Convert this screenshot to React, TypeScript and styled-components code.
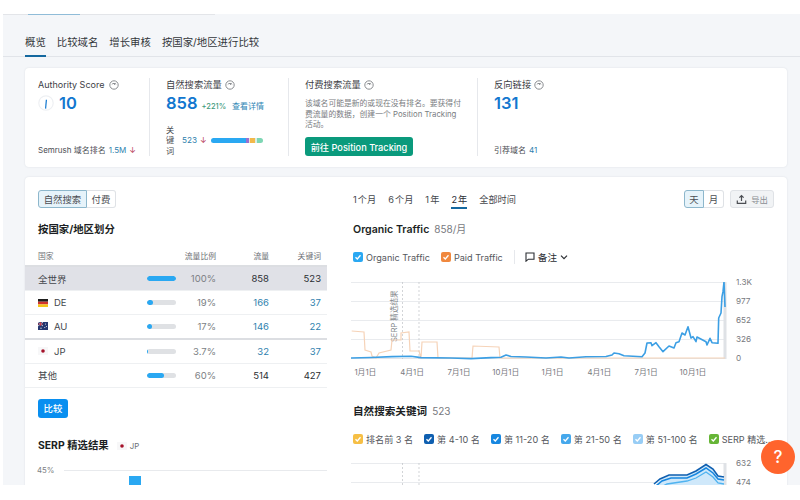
import React from "react";
import styled, { createGlobalStyle } from "styled-components";

const GlobalStyle = createGlobalStyle`
  html, body {
    margin: 0;
    background: #fff;
    font-family: Inter, "Noto Sans CJK SC", sans-serif;
    color: #2b2e33;
  }
  * { box-sizing: border-box; }
`;

const Page = styled.div`
  position: relative;
  width: 800px;
  height: 500px;
  overflow: hidden;
  background: #fff;
`;

const TopBar = styled.div`
  height: 14px;
  background: #fff;
`;

const Shell = styled.div`
  height: 471px;
  margin-left: 3px;
  overflow: hidden;
  background: #f4f6f9;
`;

const Progress = styled.div`
  display: flex;
  height: 1px;
  width: 212px;
  background: #e3e5e9;
  padding-left: 25px;
`;

const ProgressFill = styled.div`
  width: 52px;
  background: #8fbcd8;
`;

const Tabs = styled.nav`
  display: flex;
  gap: 11px;
  height: 42px;
  padding: 20px 0 0 22px;
  border-bottom: 1px solid #e1e4e9;
`;

const Tab = styled.div<{ $active?: boolean }>`
  height: 22px;
  font-size: 10.4px;
  line-height: 16px;
  color: #33363b;
  border-bottom: 2px solid ${({ $active }) => ($active ? "#14689f" : "transparent")};
`;

const Card = styled.section`
  width: 762px;
  margin-left: 22px;
  background: #fff;
  border-radius: 4px;
  box-shadow: 0 0 2px rgba(40, 50, 70, 0.12);
`;

const Summary = styled(Card)`
  display: grid;
  grid-template-columns: 111px 139px 189px 1fr;
  height: 99px;
  margin-top: 11px;
  padding: 10px 0 11px 13px;
`;

const Metric = styled.div<{ $first?: boolean }>`
  display: flex;
  flex-direction: column;
  padding-left: ${({ $first }) => ($first ? "0" : "16px")};
  border-left: ${({ $first }) => ($first ? "none" : "1px solid #e6e8ec")};
`;

const MetricTitle = styled.div`
  display: flex;
  align-items: center;
  gap: 3px;
  height: 13px;
  font-size: 9.3px;
  line-height: 13px;
  color: #3d4045;
`;

const ScoreTitle = styled(MetricTitle)`
  gap: 5px;
  font-size: 9px;
`;

const MetricValue = styled.div`
  display: flex;
  align-items: baseline;
  gap: 4px;
  height: 24px;
  font-size: 16.5px;
  line-height: 24px;
  font-weight: 600;
  color: #1277cf;
`;

const ScoreRow = styled(MetricValue)`
  align-items: center;
  gap: 5px;
`;

const Growth = styled.span`
  font-size: 7.5px;
  font-weight: 500;
  color: #3f9a7c;
`;

const DetailLink = styled.span`
  margin-left: 2px;
  font-size: 8px;
  font-weight: 400;
  color: #2f86b5;
`;

const MetricFoot = styled.div`
  display: flex;
  align-items: center;
  gap: 3px;
  margin-top: auto;
  font-size: 8px;
  line-height: 11px;
  color: #4b4e53;
`;

const FootLink = styled.span`
  color: #2f7fae;
`;

const DownArrow = styled.span`
  color: #b8415b;
  font-size: 8px;
`;

const KeywordRow = styled.div`
  display: flex;
  align-items: center;
  margin-top: auto;
`;

const KeywordLabel = styled.div`
  width: 16px;
  font-size: 8.2px;
  line-height: 10.5px;
  color: #4b4e53;
`;

const KeywordCount = styled.span`
  margin-right: 3px;
  font-size: 8.2px;
  color: #2f7fae;
`;

const Stacked = styled.div`
  display: flex;
  width: 52px;
  height: 5px;
  margin-left: 4px;
  border-radius: 3px;
  overflow: hidden;
`;

const Segment = styled.div<{ $w: number; $c: string }>`
  width: ${({ $w }) => $w}px;
  background: ${({ $c }) => $c};
`;

const Note = styled.p`
  margin: 7px 0 0;
  width: 158px;
  font-size: 7.8px;
  line-height: 10.6px;
  color: #7a7d82;
`;

const GoButton = styled.div`
  display: flex;
  align-items: center;
  justify-content: center;
  width: 108px;
  height: 19px;
  margin-top: auto;
  border-radius: 3px;
  background: #0a9a7c;
  color: #fff;
  font-size: 9.2px;
  font-weight: 500;
`;

const Main = styled(Card)`
  display: grid;
  grid-template-columns: 302px 1fr;
  column-gap: 25px;
  margin-top: 10px;
  height: 340px;
  padding: 13px 13px 0 0;
`;

const LeftPane = styled.div`
  min-width: 0;
`;

const Toggle = styled.div`
  display: flex;
  height: 18px;
  border-radius: 3px;
  font-size: 9.4px;
`;

const ToggleItem = styled.div<{ $on?: boolean; $w: number }>`
  display: flex;
  align-items: center;
  justify-content: center;
  width: ${({ $w }) => $w}px;
  color: #4b4e53;
  background: ${({ $on }) => ($on ? "#e6f3fa" : "#fff")};
  border: 1px solid ${({ $on }) => ($on ? "#8db7cc" : "#dfe2e6")};
  border-left-width: ${({ $on }) => ($on ? "1px" : "0")};
  border-radius: ${({ $on }) => ($on ? "3px 0 0 3px" : "0 3px 3px 0")};
`;

const LeftToggle = styled(Toggle)`
  margin-left: 13px;
`;

const SectionTitle = styled.h3`
  margin: 15px 0 0 13px;
  font-size: 10.4px;
  line-height: 14px;
  font-weight: 700;
  color: #1c1f24;
`;

const TableRow = styled.div<{ $world?: boolean; $head?: boolean; $thick?: boolean }>`
  display: grid;
  grid-template-columns: 109px 29px 40px 53px 52px;
  align-items: center;
  height: ${({ $head }) => ($head ? "30px" : "24.2px")};
  padding: ${({ $head }) => ($head ? "9px" : "0")} 6px 0 13px;
  font-size: ${({ $head }) => ($head ? "7.8px" : "9.5px")};
  background: ${({ $world }) => ($world ? "#e0e1e7" : "#fff")};
  border-bottom: ${({ $thick, $head }) =>
    $thick || $head ? "2px solid #dcdee2" : "1px solid #eef0f2"};
  color: ${({ $head }) => ($head ? "#6e7176" : "#2b2e33")};
`;

const NameCell = styled.div`
  display: flex;
  align-items: center;
  gap: 6px;
  color: #44474c;
`;

const NumCell = styled.div<{ $link?: boolean; $muted?: boolean; $span?: boolean }>`
  text-align: right;
  grid-column: ${({ $span }) => ($span ? "2 / 4" : "auto")};
  color: ${({ $link, $muted }) => ($link ? "#2f7fae" : $muted ? "#7c7f84" : "inherit")};
`;

const Track = styled.div`
  height: 5px;
  border-radius: 3px;
  background: #dfe1e4;
  overflow: hidden;
`;

const Fill = styled.div<{ $pct: number }>`
  width: ${({ $pct }) => $pct}%;
  min-width: 1px;
  height: 100%;
  border-radius: 3px;
  background: #2aa8f2;
`;

const CompareButton = styled.div`
  display: flex;
  align-items: center;
  justify-content: center;
  width: 30px;
  height: 19px;
  margin: 11px 0 0 13px;
  border-radius: 3px;
  background: #098ff0;
  color: #fff;
  font-size: 9.4px;
  font-weight: 500;
`;

const SerpHead = styled.div`
  display: flex;
  align-items: center;
  gap: 8px;
  margin: 21px 0 0 13px;
  font-size: 10.4px;
  line-height: 14px;
  font-weight: 700;
  color: #1c1f24;
`;

const SerpCountry = styled.span`
  display: flex;
  align-items: center;
  gap: 3px;
  font-size: 7.8px;
  font-weight: 400;
  color: #6e7176;
`;

const SerpChart = styled.div`
  display: grid;
  grid-template-columns: 27px 1fr;
  margin: 12px 0 0 12px;
  height: 30px;
  font-size: 7.8px;
  line-height: 10px;
  color: #7c7f84;
`;

const SerpPlot = styled.div`
  display: flex;
  flex-direction: column;
  border-top: 1px solid #e8eaed;
  margin-top: 5px;
  padding: 5px 0 0 65px;
`;

const SerpBar = styled.div`
  width: 12px;
  height: 20px;
  background: #2aa8f2;
`;

const RightPane = styled.div`
  min-width: 0;
`;

const RightHead = styled.div`
  display: flex;
  justify-content: space-between;
  align-items: flex-start;
  height: 20px;
`;

const Periods = styled.div`
  display: flex;
  gap: 12px;
  padding: 3px 0 0 1px;
`;

const Period = styled.div<{ $active?: boolean }>`
  height: 16px;
  font-size: 9.2px;
  line-height: 13px;
  word-spacing: -1.5px;
  color: ${({ $active }) => ($active ? "#2b2e33" : "#44474c")};
  border-bottom: 2px solid ${({ $active }) => ($active ? "#14689f" : "transparent")};
`;

const RightTools = styled.div`
  display: flex;
  gap: 6px;
`;

const ExportButton = styled.div`
  display: flex;
  align-items: center;
  justify-content: center;
  gap: 4px;
  width: 44px;
  height: 18px;
  border-radius: 3px;
  background: #f1f3f5;
  border: 1px solid #dfe2e6;
  color: #8b8e93;
  font-size: 8.4px;
`;

const ChartTitle = styled.div`
  display: flex;
  align-items: baseline;
  gap: 5px;
  margin-top: 12px;
  padding-left: 1px;
  font-size: 10.6px;
  line-height: 14px;
  font-weight: 600;
  color: #1c1f24;
`;

const ChartCount = styled.span`
  font-size: 10px;
  font-weight: 400;
  color: #77797e;
`;

const Legend = styled.div`
  display: flex;
  align-items: center;
  margin-top: 13px;
  padding-left: 1px;
  height: 14px;
  white-space: nowrap;
`;

const LegendItem = styled.div<{ $gap?: number }>`
  display: flex;
  align-items: center;
  gap: 3px;
  margin-right: ${({ $gap }) => $gap ?? 11}px;
  font-size: 9.1px;
  color: #55585d;
`;

const Box = styled.span<{ $c: string }>`
  display: flex;
  align-items: center;
  justify-content: center;
  width: 10px;
  height: 10px;
  border-radius: 2px;
  background: ${({ $c }) => $c};
`;

const NotesButton = styled.div`
  display: flex;
  align-items: center;
  gap: 3px;
  padding-left: 10px;
  border-left: 1px solid #e6e8ec;
  font-size: 9.6px;
  color: #2b2e33;
`;

const ChartGrid = styled.div`
  display: grid;
  grid-template-columns: 376px 1fr;
  column-gap: 9px;
  margin-top: 18px;
  margin-left: -1px;
`;

const YAxis = styled.div<{ $h: number }>`
  display: flex;
  flex-direction: column;
  justify-content: space-between;
  height: ${({ $h }) => $h}px;
  margin-top: -5px;
  font-size: 8.2px;
  line-height: 10px;
  color: #77797e;
`;

const XAxis = styled.div`
  display: grid;
  grid-template-columns: repeat(8, 46.8px);
  margin: 7px 0 0 -9px;
  font-size: 7.8px;
  line-height: 10px;
  color: #77797e;
  text-align: center;
`;

const Plot = styled.svg`
  display: block;
`;

const KeywordsTitle = styled(ChartTitle)`
  margin-top: 27px;
`;

const KeywordGrid = styled(ChartGrid)`
  margin-top: 17px;
`;

const HelpButton = styled.div`
  position: absolute;
  left: 761px;
  top: 440px;
  display: flex;
  align-items: center;
  justify-content: center;
  width: 34px;
  height: 34px;
  border-radius: 50%;
  background: #ff642d;
  color: #fff;
  font-size: 17px;
  font-weight: 500;
`;

const HintIcon = () => (
  <svg width="10" height="10" viewBox="0 0 10 10" fill="none" stroke="#8a8d91" strokeWidth="1">
    <circle cx="5" cy="5" r="4.2" />
    <path d="M2.8 4.4 C3.6 3.1 6.4 3.1 7.2 4.4 M5 4.8 L6.4 3.5" />
  </svg>
);

const Gauge = () => (
  <svg width="16" height="16" viewBox="0 0 16 16" fill="none">
    <circle cx="8" cy="8" r="7.2" stroke="#eef0f3" strokeWidth="1.2" />
    <path d="M8.4 4.8 L7.6 13.6" stroke="#1277cf" strokeWidth="1.2" />
  </svg>
);

const Tick = () => (
  <svg width="8" height="8" viewBox="0 0 8 8" fill="none" stroke="#fff" strokeWidth="1.3">
    <path d="M1.5 4.2 L3.3 6 L6.5 2.3" />
  </svg>
);

const FlagDE = () => (
  <svg width="10" height="8" viewBox="0 0 10 8">
    <rect width="10" height="2.7" fill="#1d1d1d" />
    <rect y="2.7" width="10" height="2.7" fill="#d0342c" />
    <rect y="5.4" width="10" height="2.6" fill="#f5c518" />
  </svg>
);

const FlagAU = () => (
  <svg width="10" height="8" viewBox="0 0 10 8">
    <rect width="10" height="8" fill="#24366f" />
    <path d="M0 0 L5 4 M5 0 L0 4" stroke="#e6e8f0" strokeWidth="0.8" />
    <path d="M2.5 0 V4 M0 2 H5" stroke="#d0343c" strokeWidth="0.8" />
    <circle cx="7.5" cy="2" r="0.5" fill="#fff" />
    <circle cx="8.4" cy="4.4" r="0.5" fill="#fff" />
    <circle cx="6.8" cy="5.6" r="0.5" fill="#fff" />
    <circle cx="3" cy="6.2" r="0.6" fill="#fff" />
  </svg>
);

const FlagJP = () => (
  <svg width="10" height="8" viewBox="0 0 10 8">
    <rect width="10" height="8" fill="#f7f7f8" />
    <circle cx="5" cy="4" r="1.8" fill="#a5122a" />
  </svg>
);

const UploadIcon = () => (
  <svg width="11" height="11" viewBox="0 0 11 11" fill="none" stroke="#4b4e53" strokeWidth="1.2">
    <path d="M5.5 7 V1.6 M3.4 3.6 L5.5 1.5 L7.6 3.6 M1.3 6.6 V9.3 H9.7 V6.6" />
  </svg>
);

const NoteIcon = () => (
  <svg width="10" height="10" viewBox="0 0 10 10" fill="none" stroke="#2b2e33" strokeWidth="1.1">
    <path d="M1 1 H9 V7.2 H3.4 L1 9.2 Z" />
  </svg>
);

const ChevronIcon = () => (
  <svg width="8" height="8" viewBox="0 0 8 8" fill="none" stroke="#2b2e33" strokeWidth="1.2">
    <path d="M1 2.6 L4 5.6 L7 2.6" />
  </svg>
);

const rows = [
  { flag: <FlagDE />, name: "DE", pct: 19, label: "19%", traffic: "166", keywords: "37", link: true },
  { flag: <FlagAU />, name: "AU", pct: 17, label: "17%", traffic: "146", keywords: "22", link: true, thick: true },
  { flag: <FlagJP />, name: "JP", pct: 3.7, label: "3.7%", traffic: "32", keywords: "37", link: true },
  { name: "其他", pct: 60, label: "60%", traffic: "514", keywords: "427" },
];

const organic =
  "0,76 20,75.5 41,74.6 60,74.2 70,75.6 100,76 120,76.6 140,75.6 150,75.2 155,73 160,74.5 175,75 195,76 210,75 218,76 235,74.7 255,74.5 261,73 263,71 268,71.7 273,73.7 291,74.7 294,71 296,61 300,60.7 301,63.7 305,60.7 308,64.7 312,69.7 318,64 323,66 325,60.7 328,59.7 331,51 334,53 337,44.7 340,56 342,54.7 345,59.7 346,55 355,59.7 356,63 359,56.3 361,60.7 367,61.3 367.7,36 370,31 371,14.7 372,9.7 373,0 374,25";

const paid =
  "0.7,49 13,50 14,68 20,70 21,74 25,76 28,71 40,68 41,58 50,58 50,51 58,50 59,69 68,69 70,76 71,60 86,60 87,76 121,76 122,64 148,65 149,76 374,76";

const TrafficPlot = () => (
  <Plot width="376" height="78" viewBox="0 0 376 78" fill="none">
    {[0.5, 19.5, 38.5, 57.5].map((y) => (
      <line key={y} x1="0" x2="375" y1={y} y2={y} stroke="#e9ebee" strokeWidth="1" />
    ))}
    <line x1="0" x2="375" y1="76.5" y2="76.5" stroke="#e2e4e8" strokeWidth="1" />
    <rect x="372.5" y="0" width="3" height="77" fill="#dfe2e6" />
    <line x1="51.5" x2="51.5" y1="0" y2="77" stroke="#bfc2c6" strokeWidth="0.7" strokeDasharray="2 2" />
    <line x1="68" x2="68" y1="0" y2="77" stroke="#bfc2c6" strokeWidth="0.7" strokeDasharray="2 2" />
    <text
      transform="translate(46 60) rotate(-90)"
      fontSize="7.6"
      fill="#85888c"
      fontFamily='Inter, "Noto Sans CJK SC", sans-serif'
    >
      SERP 精选结果
    </text>
    <polyline points={paid} stroke="#f6d3b8" strokeWidth="1.2" />
    <polyline points={organic} stroke="#3c9fe4" strokeWidth="1.6" strokeLinejoin="round" />
  </Plot>
);

const KeywordPlot = () => (
  <Plot width="376" height="24" viewBox="0 0 376 24" fill="none">
    <line x1="0" x2="375" y1="0.5" y2="0.5" stroke="#e9ebee" strokeWidth="1" />
    <line x1="0" x2="375" y1="19.5" y2="19.5" stroke="#e9ebee" strokeWidth="1" />
    <rect x="372.5" y="0" width="3" height="24" fill="#dfe2e6" />
    <line x1="51.5" x2="51.5" y1="0" y2="24" stroke="#bfc2c6" strokeWidth="0.7" strokeDasharray="2 2" />
    <line x1="68" x2="68" y1="0" y2="24" stroke="#bfc2c6" strokeWidth="0.7" strokeDasharray="2 2" />
    <path
      d="M303 24 L309 17 L318 12 L336 12 L345 8 L355 1 L362 6 L367 14 L373 15 L373 24 Z"
      fill="#cfe8fa"
    />
    <polyline points="303,21 309,16 318,12 336,12 345,8 355,1.5 362,6 367,13 373,14" stroke="#0f5fb0" strokeWidth="1.6" />
    <polyline points="305,23 311,18 320,15 336,15 345,11 355,5 362,10 367,16 373,17" stroke="#1787e0" strokeWidth="1.5" />
    <polyline points="310,24 316,21 336,18 345,15 355,9 362,14 367,20 373,21" stroke="#4fb3f0" strokeWidth="1.3" />
  </Plot>
);

export default function App() {
  return (
    <Page>
      <GlobalStyle />
      <TopBar />
      <Shell>
        <Progress>
          <ProgressFill />
        </Progress>
        <Tabs>
          <Tab $active>概览</Tab>
          <Tab>比较域名</Tab>
          <Tab>增长审核</Tab>
          <Tab>按国家/地区进行比较</Tab>
        </Tabs>

        <Summary>
          <Metric $first>
            <ScoreTitle>
              Authority Score <HintIcon />
            </ScoreTitle>
            <ScoreRow>
              <Gauge />
              10
            </ScoreRow>
            <MetricFoot>
              Semrush 域名排名 <FootLink>1.5M</FootLink> <DownArrow>↓</DownArrow>
            </MetricFoot>
          </Metric>
          <Metric>
            <MetricTitle>
              自然搜索流量 <HintIcon />
            </MetricTitle>
            <MetricValue>
              858 <Growth>+221%</Growth> <DetailLink>查看详情</DetailLink>
            </MetricValue>
            <KeywordRow>
              <KeywordLabel>关键词</KeywordLabel>
              <KeywordCount>523</KeywordCount>
              <DownArrow>↓</DownArrow>
              <Stacked>
                <Segment $w={35} $c="#2aa8f2" />
                <Segment $w={3} $c="#9b6fd0" />
                <Segment $w={1} $c="#e8e4d0" />
                <Segment $w={5} $c="#f2b84b" />
                <Segment $w={2} $c="#d8efe6" />
                <Segment $w={6} $c="#7ed6b4" />
              </Stacked>
            </KeywordRow>
          </Metric>
          <Metric>
            <MetricTitle>
              付费搜索流量 <HintIcon />
            </MetricTitle>
            <Note>该域名可能是新的或现在没有排名。要获得付费流量的数据，创建一个 Position Tracking 活动。</Note>
            <GoButton>前往 Position Tracking</GoButton>
          </Metric>
          <Metric>
            <MetricTitle>
              反向链接 <HintIcon />
            </MetricTitle>
            <MetricValue>131</MetricValue>
            <MetricFoot>
              引荐域名 <FootLink>41</FootLink>
            </MetricFoot>
          </Metric>
        </Summary>

        <Main>
          <LeftPane>
            <LeftToggle>
              <ToggleItem $on $w={49}>自然搜索</ToggleItem>
              <ToggleItem $w={29}>付费</ToggleItem>
            </LeftToggle>
            <SectionTitle>按国家/地区划分</SectionTitle>
            <TableRow $head>
              <div>国家</div>
              <NumCell $span>流量比例</NumCell>
              <NumCell>流量</NumCell>
              <NumCell>关键词</NumCell>
            </TableRow>
            <TableRow $world>
              <NameCell>全世界</NameCell>
              <Track>
                <Fill $pct={100} />
              </Track>
              <NumCell $muted>100%</NumCell>
              <NumCell>858</NumCell>
              <NumCell>523</NumCell>
            </TableRow>
            {rows.map((r) => (
              <TableRow key={r.name} $thick={r.thick}>
                <NameCell>
                  {r.flag}
                  {r.name}
                </NameCell>
                <Track>
                  <Fill $pct={r.pct} />
                </Track>
                <NumCell $muted>{r.label}</NumCell>
                <NumCell $link={r.link}>{r.traffic}</NumCell>
                <NumCell $link={r.link}>{r.keywords}</NumCell>
              </TableRow>
            ))}
            <CompareButton>比较</CompareButton>
            <SerpHead>
              SERP 精选结果
              <SerpCountry>
                <FlagJP /> JP
              </SerpCountry>
            </SerpHead>
            <SerpChart>
              <div>45%</div>
              <SerpPlot>
                <SerpBar />
              </SerpPlot>
            </SerpChart>
          </LeftPane>

          <RightPane>
            <RightHead>
              <Periods>
                <Period>1 个月</Period>
                <Period>6 个月</Period>
                <Period>1 年</Period>
                <Period $active>2 年</Period>
                <Period>全部时间</Period>
              </Periods>
              <RightTools>
                <Toggle>
                  <ToggleItem $on $w={20}>天</ToggleItem>
                  <ToggleItem $w={20}>月</ToggleItem>
                </Toggle>
                <ExportButton>
                  <UploadIcon /> 导出
                </ExportButton>
              </RightTools>
            </RightHead>

            <ChartTitle>
              Organic Traffic <ChartCount>858/月</ChartCount>
            </ChartTitle>
            <Legend>
              <LegendItem>
                <Box $c="#2aa8f2"><Tick /></Box> Organic Traffic
              </LegendItem>
              <LegendItem>
                <Box $c="#f0883e"><Tick /></Box> Paid Traffic
              </LegendItem>
              <NotesButton>
                <NoteIcon /> 备注 <ChevronIcon />
              </NotesButton>
            </Legend>
            <ChartGrid>
              <div>
                <TrafficPlot />
                <XAxis>
                  <div>1月1日</div>
                  <div>4月1日</div>
                  <div>7月1日</div>
                  <div>10月1日</div>
                  <div>1月1日</div>
                  <div>4月1日</div>
                  <div>7月1日</div>
                  <div>10月1日</div>
                </XAxis>
              </div>
              <YAxis $h={86}>
                <div>1.3K</div>
                <div>977</div>
                <div>652</div>
                <div>326</div>
                <div>0</div>
              </YAxis>
            </ChartGrid>

            <KeywordsTitle>
              自然搜索关键词 <ChartCount>523</ChartCount>
            </KeywordsTitle>
            <Legend>
              <LegendItem>
                <Box $c="#f6bf45"><Tick /></Box> 排名前 3 名
              </LegendItem>
              <LegendItem>
                <Box $c="#0f5fb0"><Tick /></Box> 第 4-10 名
              </LegendItem>
              <LegendItem>
                <Box $c="#1787e0"><Tick /></Box> 第 11-20 名
              </LegendItem>
              <LegendItem>
                <Box $c="#45a8ec"><Tick /></Box> 第 21-50 名
              </LegendItem>
              <LegendItem>
                <Box $c="#98cdf5"><Tick /></Box> 第 51-100 名
              </LegendItem>
              <LegendItem $gap={0}>
                <Box $c="#66b536"><Tick /></Box> SERP 精选...
              </LegendItem>
            </Legend>
            <KeywordGrid>
              <KeywordPlot />
              <YAxis $h={29}>
                <div>632</div>
                <div>474</div>
              </YAxis>
            </KeywordGrid>
          </RightPane>
        </Main>
      </Shell>
      <HelpButton>?</HelpButton>
    </Page>
  );
}
